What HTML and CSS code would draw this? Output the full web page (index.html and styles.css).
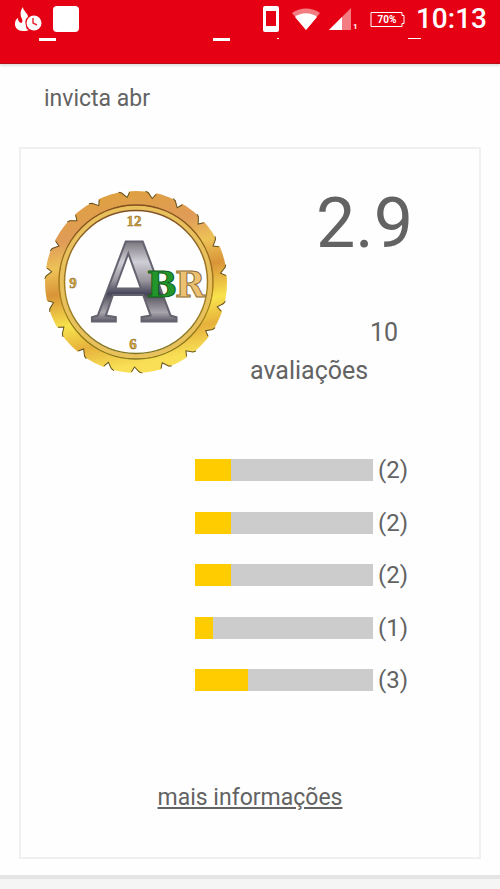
FILE: index.html
```html
<!DOCTYPE html>
<html lang="pt-BR">
<head>
  <meta charset="utf-8">
  <meta name="viewport" content="width=device-width, initial-scale=1.0">
  <title>invicta abr</title>
  <link rel="stylesheet" href="styles.css">
</head>
<body>
  <header class="header">
    <div class="status-bar">
      <svg class="icon-flame" width="27" height="25" viewBox="0 0 27 25" fill="#fff">
        <path d="M8 0c0 4 5 6 5 10-3 2-3 5-2 9 0 3 2 4 3 4-2 1-4 1-6 1-5 0-8-3-8-7 0-3 1-5 3-6 0 3 1 4 3 5 1 0 2-2 1-4-2-4-2-8 1-12z"/>
        <circle cx="19" cy="16" r="7.5"/>
        <path d="M18 11v5l4 2" fill="none" stroke="#e8313b" stroke-width="1.5"/>
      </svg>
      <span class="app-square"></span>
      <div class="status-right">
        <svg width="16" height="26" viewBox="0 0 16 26">
          <path fill="#fff" fill-rule="evenodd" d="M2 0h12a2 2 0 0 1 2 2v22a2 2 0 0 1-2 2H2a2 2 0 0 1-2-2V2a2 2 0 0 1 2-2zm1 5v15h10V5z"/>
        </svg>
        <svg class="icon-wifi" width="28" height="22" viewBox="0 0 28 22">
          <path fill="#f37b82" d="M0 5C8-1 20-1 28 5L14 22z"/>
          <path fill="#fff" d="M3 9c6-5 16-5 22 0L14 22z"/>
        </svg>
        <svg class="icon-signal" width="29" height="22" viewBox="0 0 29 22">
          <path fill="#f37b82" d="M22 0v22H0z"/>
          <path fill="#fff" d="M13 9v13H0z"/>
          <text x="24" y="21" fill="#fff" font-size="8" font-weight="700">1</text>
        </svg>
        <svg class="icon-battery" width="35" height="17" viewBox="0 0 35 17">
          <path fill="none" stroke="#fff" d="M1 1.5h31v3h2v8h-2v3H1z"/>
          <text x="17" y="12" fill="#fff" font-size="10" font-weight="700" text-anchor="middle">70%</text>
        </svg>
        <span class="clock">10:13</span>
      </div>
    </div>
    <!-- bottom edge of the page bar, mostly hidden by the status bar -->
    <div class="bar-edge">
      <span class="edge-mark edge-menu"></span>
      <span class="edge-mark edge-logo"></span>
      <span class="edge-mark edge-dot"></span>
      <span class="edge-mark edge-cart"></span>
    </div>
  </header>

  <main class="content">
    <h1 class="store-name">invicta abr</h1>

    <section class="card">
      <div class="summary">
        <svg class="logo" width="186" height="186" viewBox="0 0 186 186" role="img" aria-label="ABR">
          <defs>
            <linearGradient id="gold" x1="0.3" y1="0" x2="0.5" y2="1">
              <stop offset="0" stop-color="#dfa044"/>
              <stop offset="0.2" stop-color="#e09b58"/>
              <stop offset="0.35" stop-color="#edc357"/>
              <stop offset="0.5" stop-color="#d99438"/>
              <stop offset="0.7" stop-color="#f8e34c"/>
              <stop offset="0.85" stop-color="#e6b13c"/>
              <stop offset="1" stop-color="#f8df55"/>
            </linearGradient>
            <linearGradient id="rim" x1="0" y1="0" x2="0" y2="1">
              <stop offset="0" stop-color="#80501f"/>
              <stop offset="0.6" stop-color="#a8821f"/>
              <stop offset="1" stop-color="#81751d"/>
            </linearGradient>
            <linearGradient id="steel" x1="0" y1="0" x2="0" y2="1">
              <stop offset="0.2" stop-color="#77737b"/>
              <stop offset="0.36" stop-color="#d0ced6"/>
              <stop offset="0.5" stop-color="#9a969e"/>
              <stop offset="0.6" stop-color="#46465a"/>
              <stop offset="0.66" stop-color="#77747d"/>
              <stop offset="0.74" stop-color="#a9a5ad"/>
              <stop offset="0.8" stop-color="#66646f"/>
            </linearGradient>
            <g id="notch">
              <path d="M86 0l7 8 4-8z" fill="#fff"/>
              <path d="M85 2l3 1 5 5 3-5" fill="none" stroke="#655320"/>
            </g>
          </defs>
          <circle cx="93" cy="93" r="82" fill="none" stroke="url(#gold)" stroke-width="18"/>
          <circle cx="93" cy="93" r="77" fill="none" stroke="url(#rim)" stroke-width="1.5"/>
          <circle cx="93" cy="93" r="74" fill="none" stroke="#e8c15c" stroke-width="4"/>
          <circle cx="93" cy="93" r="71.5" fill="none" stroke="url(#rim)" stroke-width="1.5"/>
          <use href="#notch" transform="rotate(-6 93 93)"/>
          <use href="#notch" transform="rotate(11 93 93)"/>
          <use href="#notch" transform="rotate(29 93 93)"/>
          <use href="#notch" transform="rotate(47 93 93)"/>
          <use href="#notch" transform="rotate(65 93 93)"/>
          <use href="#notch" transform="rotate(84 93 93)"/>
          <use href="#notch" transform="rotate(107 93 93)"/>
          <use href="#notch" transform="rotate(125 93 93)"/>
          <use href="#notch" transform="rotate(144 93 93)"/>
          <use href="#notch" transform="rotate(162 93 93)"/>
          <use href="#notch" transform="rotate(181 93 93)"/>
          <use href="#notch" transform="rotate(199 93 93)"/>
          <use href="#notch" transform="rotate(218 93 93)"/>
          <use href="#notch" transform="rotate(238 93 93)"/>
          <use href="#notch" transform="rotate(256 93 93)"/>
          <use href="#notch" transform="rotate(277 93 93)"/>
          <use href="#notch" transform="rotate(295 93 93)"/>
          <use href="#notch" transform="rotate(316 93 93)"/>
          <use href="#notch" transform="rotate(334 93 93)"/>
          <g class="logo-hours">
            <text x="91" y="37">12</text>
            <text x="30" y="99">9</text>
            <text x="90" y="160">6</text>
          </g>
          <text class="logo-a" x="91" y="132" fill="url(#steel)">A</text>
          <text class="logo-b" x="119" y="108">B</text>
          <text class="logo-r" x="147" y="108">R</text>
        </svg>
        <div class="rating">
          <p class="score">2.9</p>
          <p class="count">10</p>
          <p class="count-label">avaliações</p>
        </div>
      </div>

      <ul class="bars">
        <li><span class="track"><span class="fill" style="width: 20%"></span></span>(2)</li>
        <li><span class="track"><span class="fill" style="width: 20%"></span></span>(2)</li>
        <li><span class="track"><span class="fill" style="width: 20%"></span></span>(2)</li>
        <li><span class="track"><span class="fill" style="width: 10%"></span></span>(1)</li>
        <li><span class="track"><span class="fill" style="width: 30%"></span></span>(3)</li>
      </ul>

      <a class="more" href="#">mais informações</a>
    </section>
  </main>

  <footer class="footer"></footer>
</body>
</html>
```
FILE: styles.css
```css
*, *::before, *::after {
  box-sizing: border-box;
  margin: 0;
  padding: 0;
}

body {
  font-family: Roboto, sans-serif;
  font-size: 23px;
  line-height: 38px;
  background-color: #fefefe;
  color: #636363;
  min-height: 100vh;
  display: flex;
  flex-direction: column;
}

.header {
  background-color: #e60014;
  border-bottom: 1px solid #b3101a;
  box-shadow: 0 2px 2px #e4e2df;
  height: 64px;
}

.status-bar {
  display: flex;
  align-items: center;
  height: 38px;
  padding: 0 13px 0 15px;
  color: #fff;
}

.app-square {
  width: 26px;
  height: 26px;
  margin-left: 11px;
  border-radius: 4px;
  background-color: #fff;
}

.status-right {
  display: flex;
  align-items: center;
  margin-left: auto;
}

.icon-wifi {
  margin-left: 13px;
}

.icon-signal {
  margin-left: 9px;
}

.icon-battery {
  margin-left: 12px;
}

.clock {
  margin-left: 11px;
  font-size: 28px;
  font-weight: 500;
  line-height: 40px;
}

.bar-edge {
  display: flex;
  align-items: flex-start;
}

.edge-mark {
  height: 3px;
  background-color: #fff;
}

.edge-menu {
  width: 17px;
  margin-left: 39px;
}

.edge-logo {
  width: 17px;
  margin-left: 157px;
}

.edge-dot {
  width: 2px;
  height: 1px;
  margin-left: 47px;
}

.edge-cart {
  width: 13px;
  height: 1px;
  margin-left: auto;
  margin-right: 79px;
}

.content {
  padding: 16px 19px;
}

.store-name {
  padding-left: 25px;
  font-size: 23px;
  font-weight: 400;
}

.card {
  margin-top: 29px;
  padding: 40px 22px;
  border: 2px solid #f0f0f0;
}

.summary {
  display: flex;
}

.logo {
  flex: none;
}

.logo text {
  font-family: "DejaVu Serif", serif;
  font-weight: 700;
  text-anchor: middle;
}

.logo .logo-hours {
  font-size: 15px;
  fill: #d9a838;
  stroke: #8c6c2c;
  stroke-width: 0.5px;
}

.logo .logo-hours text {
  font-family: "Liberation Serif", serif;
}

.logo .logo-a {
  font-family: "Liberation Serif", serif;
  font-size: 120px;
  stroke: #65636f;
  stroke-width: 2px;
}

.logo .logo-b,
.logo .logo-r {
  font-size: 36px;
}

.logo .logo-b {
  fill: #22962a;
  stroke: #125c1a;
}

.logo .logo-r {
  fill: #ecc172;
  stroke: #8d6c35;
}

.rating {
  padding-left: 21px;
  font-size: 25px;
}

.score {
  padding-left: 66px;
  font-size: 70px;
  line-height: 68px;
}

.count {
  margin-top: 57px;
  padding-left: 120px;
}

.bars {
  display: flex;
  flex-direction: column;
  justify-content: space-between;
  height: 248px;
  margin-top: 61px;
  padding-left: 152px;
  font-size: 24px;
  list-style: none;
}

.bars li {
  display: flex;
  align-items: center;
}

.track {
  width: 178px;
  height: 22px;
  margin-right: 5px;
  background-color: #ccc;
}

.fill {
  display: block;
  height: 100%;
  background-color: #fc0;
}

.more {
  display: block;
  width: fit-content;
  margin: 80px auto 0;
  color: #636363;
}

.footer {
  flex: 1;
  border-top: 4px solid #e4e4e4;
  background-color: #f5f5f5;
}
```
